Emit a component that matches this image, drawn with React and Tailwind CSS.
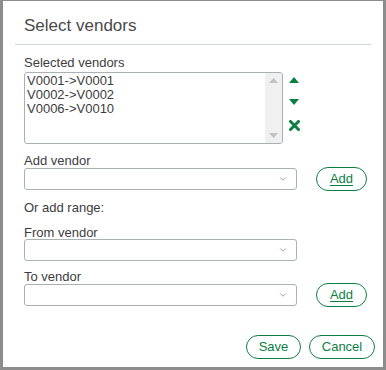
import { ChevronDown } from 'lucide-react';

const GREEN = '#0b7f43';

const Label = ({ children, className = '' }) => (
  <div className={`text-[13px] leading-[14px] text-[#3d3d3d] ${className}`}>{children}</div>
);

const SelectBox = () => (
  <div className="w-[273px] h-[22px] border border-[#a9b1b4] rounded-[3px] bg-white flex items-center justify-end pr-[8px]">
    <ChevronDown size={10} strokeWidth={1.5} className="text-[#666]" />
  </div>
);

const PillButton = ({ children, underline, className = '' }) => (
  <button
    className={`h-[24px] rounded-full border border-[#0b7f43] bg-white text-[13px] text-[#0b7f43] flex items-center justify-center ${underline ? 'underline underline-offset-2' : ''} ${className}`}
  >
    {children}
  </button>
);

const App = () => {
  const selected = ['V0001->V0001', 'V0002->V0002', 'V0006->V0010'];

  return (
    <div
      className="w-[386px] h-[370px] bg-white border-t border-l-[3px] border-r-[3px] border-b-[3px] border-[#8c8c8c] flex flex-col"
      style={{ fontFamily: '"Liberation Sans", Arial, sans-serif' }}
    >
      {/* Header */}
      <div className="pl-[21px] pt-[15px] h-[43px] text-[17px] leading-[20px] text-[#4a4a4a]">Select vendors</div>
      <div className="mx-[12px] h-px bg-[#cfd4d6]" />

      <div className="pl-[21px] pr-[8px] pt-[11px] flex flex-col">
        <Label>Selected vendors</Label>

        {/* Selected list */}
        <div className="flex mt-[2px]">
          <div className="w-[259px] h-[72px] border border-[#a9b1b4] rounded-[3px] flex overflow-hidden">
            <div className="flex-1 pl-[2px] pt-[1px] text-[13px] leading-[14px] text-[#3d3d3d]">
              {selected.map((s) => (
                <div key={s}>{s}</div>
              ))}
            </div>
            <div className="w-[17px] bg-[#f0f0f0] flex flex-col items-center justify-between py-[5px]">
              <svg width="9" height="5" viewBox="0 0 9 5"><polygon points="0,5 4.5,0 9,5" fill="#c2c2c2" /></svg>
              <svg width="9" height="5" viewBox="0 0 9 5"><polygon points="0,0 4.5,5 9,0" fill="#c2c2c2" /></svg>
            </div>
          </div>
          <div className="ml-[6px] flex flex-col pt-[5px]">
            <svg width="10" height="6" viewBox="0 0 10 6" className="mb-[16px]"><polygon points="0,6 5,0 10,6" fill={GREEN} /></svg>
            <svg width="10" height="6" viewBox="0 0 10 6" className="mb-[15px]"><polygon points="0,0 5,6 10,0" fill={GREEN} /></svg>
            <svg width="11" height="11" viewBox="0 0 11 11">
              <path d="M1.5 1.5 L9.5 9.5 M9.5 1.5 L1.5 9.5" stroke={GREEN} strokeWidth="3" strokeLinecap="square" />
            </svg>
          </div>
        </div>

        {/* Add vendor */}
        <Label className="mt-[10px]">Add vendor</Label>
        <div className="flex items-center mt-[-1px]">
          <SelectBox />
          <PillButton underline className="ml-[19px] w-[51px]">Add</PillButton>
        </div>

        <Label className="mt-[10px]">Or add range:</Label>

        <Label className="mt-[11px]">From vendor</Label>
        <div className="mt-[-1px]">
          <SelectBox />
        </div>

        <Label className="mt-[9px]">To vendor</Label>
        <div className="flex items-center mt-[-1px]">
          <SelectBox />
          <PillButton underline className="ml-[19px] w-[51px]">Add</PillButton>
        </div>

        {/* Footer */}
        <div className="flex justify-end gap-[8px] mt-[28px]">
          <PillButton className="w-[55px]">Save</PillButton>
          <PillButton className="w-[66px]">Cancel</PillButton>
        </div>
      </div>
    </div>
  );
};

export default App;
